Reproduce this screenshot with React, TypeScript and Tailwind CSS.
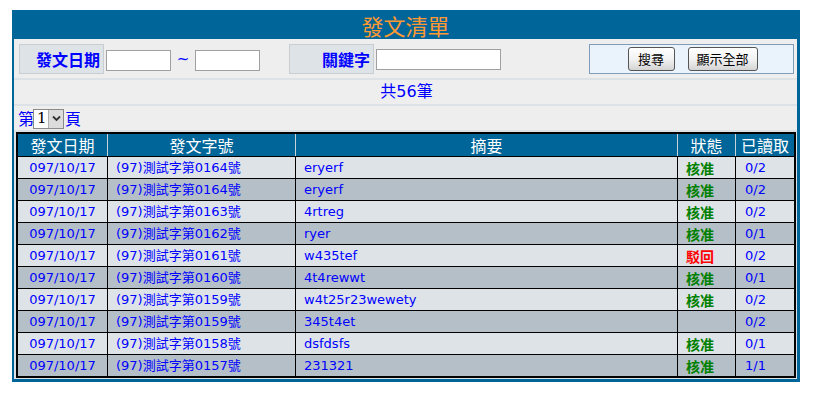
import React from "react";

type Row = { no: string; sum: string; st: "ok" | "rej" | ""; read: string };

const rows: Row[] = [
  { no: "0164", sum: "eryerf", st: "ok", read: "0/2" },
  { no: "0164", sum: "eryerf", st: "ok", read: "0/2" },
  { no: "0163", sum: "4rtreg", st: "ok", read: "0/2" },
  { no: "0162", sum: "ryer", st: "ok", read: "0/1" },
  { no: "0161", sum: "w435tef", st: "rej", read: "0/2" },
  { no: "0160", sum: "4t4rewwt", st: "ok", read: "0/1" },
  { no: "0159", sum: "w4t25r23wewety", st: "ok", read: "0/2" },
  { no: "0159", sum: "345t4et", st: "", read: "0/2" },
  { no: "0158", sum: "dsfdsfs", st: "ok", read: "0/1" },
  { no: "0157", sum: "231321", st: "ok", read: "1/1" },
];

function Label({ text }: { text: string }) {
  return (
    <div className="w-[85px] h-[30px] shrink-0 border border-[#c8cdd2] bg-[#dee3e8] flex items-center justify-end pr-[3px] text-[16px] leading-none font-bold text-[#0000ff] font-['Noto_Sans_CJK_TC',sans-serif]">
      {text}
    </div>
  );
}

function Btn({ text, w }: { text: string; w: string }) {
  return (
    <div
      className={`${w} h-[24px] flex items-center justify-center rounded-[3px] border border-[#555555] bg-linear-to-b from-white via-[#f2f2f2] to-[#d4d4d4] text-[13px] leading-none text-black font-['Noto_Sans_CJK_TC',sans-serif]`}
    >
      {text}
    </div>
  );
}

export default function App() {
  return (
    <div className="w-[817px] min-h-[399px] bg-white pl-[12px] pt-[10px] font-['DejaVu_Sans','Noto_Sans_CJK_TC',sans-serif]">
      <div className="w-[788px] bg-[#006699] border-l-2 border-r-[3px] border-b-[3px] border-[#006699]">
        <div className="h-[29px] flex items-center justify-center text-[22px] leading-none text-[#ff9933] font-['Noto_Sans_CJK_TC',sans-serif]">
          發文清單
        </div>
        <div className="bg-[#dde2e6] flex flex-col gap-[2px] pb-[1px]">
          {/* search row */}
          <div className="h-[39px] bg-[#eeeeee] flex items-center pl-[5px]">
            <Label text="發文日期" />
            <div className="ml-[2px] mt-[3px] w-[65px] h-[21px] bg-white border border-[#a0a0a0]" />
            <div className="w-[24px] text-center text-[15px] leading-none text-[#0000ff] mt-[2px]">~</div>
            <div className="mt-[3px] w-[65px] h-[21px] bg-white border border-[#a0a0a0]" />
            <div className="ml-[29px]">
              <Label text="關鍵字" />
            </div>
            <div className="ml-[2px] mt-[1px] w-[125px] h-[21px] bg-white border border-[#a0a0a0]" />
            <div className="ml-[88px] w-[205px] h-[30px] border border-[#7f9db9] bg-[#eaf2fb] flex items-center justify-center gap-[13px] pl-[2px]">
              <Btn text="搜尋" w="w-[47px]" />
              <Btn text="顯示全部" w="w-[70px]" />
            </div>
          </div>
          {/* count row */}
          <div className="h-[24px] bg-[#eeeeee] flex items-center justify-center text-[16px] leading-none text-[#0000ff] pl-[2px]">
            共56筆
          </div>
          {/* page row */}
          <div className="h-[24px] bg-[#eeeeee] flex items-center pl-[4px] text-[16px] leading-none text-[#0000ff] font-['Noto_Sans_CJK_TC',sans-serif]">
            <span>第</span>
            <div className="ml-[-1px] w-[31px] h-[20px] mt-[1px] border border-[#8a8a8a] bg-white flex items-stretch">
              <div className="flex-1 flex items-center pl-[3px] text-[15px] text-black font-['DejaVu_Serif',serif]">1</div>
              <div className="w-[15px] bg-[#dcdcdc] border-l border-[#b0b0b0] flex items-center justify-center">
                <svg width="9" height="7" viewBox="0 0 9 7">
                  <path d="M1 1.5 L4.5 5 L8 1.5" stroke="#333" strokeWidth="1.8" fill="none" />
                </svg>
              </div>
            </div>
            <span className="ml-[1px]">頁</span>
          </div>
          {/* table */}
          <div className="ml-[2px] w-[780px] border-2 border-black">
            <div className="h-[22px] flex bg-[#006699] text-white text-[16px] leading-none font-['Noto_Sans_CJK_TC',sans-serif]">
              <div className="w-[89px] flex items-center justify-center">發文日期</div>
              <div className="w-[188px] border-l border-[#c8d0d8] flex items-center justify-center">發文字號</div>
              <div className="w-[382px] border-l border-[#c8d0d8] flex items-center justify-center">摘要</div>
              <div className="w-[58px] border-l border-[#c8d0d8] flex items-center justify-center">狀態</div>
              <div className="w-[59px] border-l border-[#c8d0d8] flex items-center justify-center">已讀取</div>
            </div>
            {rows.map((r, i) => (
              <div
                key={i}
                className={`h-[22px] flex border-t border-black text-[13px] leading-none text-[#0000ff] ${
                  i % 2 === 0 ? "bg-[#dee3e7]" : "bg-[#b5bfc7]"
                }`}
              >
                <div className="w-[89px] flex items-center justify-center">097/10/17</div>
                <div className="w-[188px] border-l border-black flex items-center pl-[8px]">
                  (97)測試字第{r.no}號
                </div>
                <div className="w-[382px] border-l border-black flex items-center pl-[8px]">{r.sum}</div>
                <div className="w-[58px] border-l border-black flex items-center pl-[8px] text-[14px] font-bold font-['Noto_Sans_CJK_TC',sans-serif]">
                  {r.st === "ok" ? (
                    <span className="text-[#008000]">核准</span>
                  ) : r.st === "rej" ? (
                    <span className="text-[#ff0000]">駁回</span>
                  ) : null}
                </div>
                <div className="w-[59px] border-l border-black flex items-center pl-[9px]">{r.read}</div>
              </div>
            ))}
          </div>
        </div>
      </div>
    </div>
  );
}
